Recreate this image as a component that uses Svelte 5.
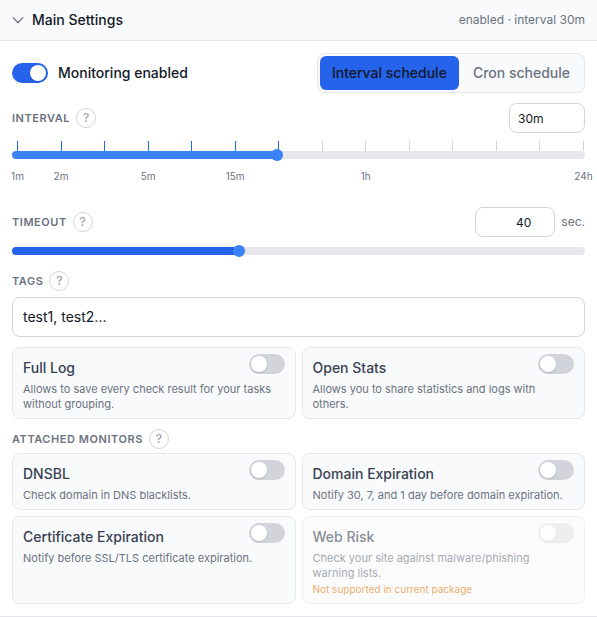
<script>
  const steps = ['1m', '2m', '', '5m', '', '15m', '', '', '1h', '', '', '', '', '24h'];

  let monitoring = $state(true);
  let schedule = $state('interval');
  let step = $state(6);
  let interval = $state('30m');
  let timeout = $state(40);
  let tags = $state('test1, test2...');

  const options = $state([
    { id: 'full-log', title: 'Full Log', text: 'Allows to save every check result for your tasks without grouping.', on: false },
    { id: 'open-stats', title: 'Open Stats', text: 'Allows you to share statistics and logs with others.', on: false }
  ]);
  const monitors = $state([
    { id: 'dnsbl', title: 'DNSBL', text: 'Check domain in DNS blacklists.', on: false },
    { id: 'domain', title: 'Domain Expiration', text: 'Notify 30, 7, and 1 day before domain expiration.', on: false },
    { id: 'certificate', title: 'Certificate Expiration', text: 'Notify before SSL/TLS certificate expiration.', on: false },
    { id: 'web-risk', title: 'Web Risk', text: 'Check your site against malware/phishing warning lists.', note: 'Not supported in current package', disabled: true, on: false }
  ]);
</script>

{#snippet help(topic)}
  <button type="button" class="help" aria-label={`Help: ${topic}`}>?</button>
{/snippet}

{#snippet cards(items)}
  <div class="cards">
    {#each items as item (item.id)}
      <div class="card" class:disabled={item.disabled}>
        <div class="card-head">
          <label for={item.id}>{item.title}</label>
          <input type="checkbox" role="switch" class="switch" id={item.id} bind:checked={item.on} disabled={item.disabled} />
        </div>
        <p>{item.text}</p>
        {#if item.note}<p class="note">{item.note}</p>{/if}
      </div>
    {/each}
  </div>
{/snippet}

<section class="panel">
  <header>
    <button type="button" class="collapse" aria-expanded="true">
      <svg width="12" height="12" viewBox="0 0 12 12" fill="none" stroke="#6b7280" stroke-width="1.3" stroke-linecap="round" stroke-linejoin="round" aria-hidden="true">
        <path d="M1.2 3.6 6 8.7l4.8-5.1" />
      </svg>
      Main Settings
    </button>
    <span class="summary">enabled · interval {interval}</span>
  </header>

  <div class="body">
    <div class="row">
      <label class="monitoring">
        <input type="checkbox" role="switch" class="switch" bind:checked={monitoring} />
        Monitoring enabled
      </label>
      <div class="segments">
        <button type="button" class:active={schedule === 'interval'} onclick={() => (schedule = 'interval')}>Interval schedule</button>
        <button type="button" class:active={schedule === 'cron'} onclick={() => (schedule = 'cron')}>Cron schedule</button>
      </div>
    </div>

    <div class="row">
      <div class="caption"><label for="interval">Interval</label>{@render help('interval')}</div>
      <input id="interval" class="box interval" type="text" bind:value={interval} />
    </div>
    <div class="scale">
      <div class="marks">
        {#each steps as _, i}<i class:passed={i <= step}></i>{/each}
      </div>
      <input type="range" class="light" aria-label="Interval step" min="0" max="13" bind:value={step} style:--fill={step / 13} />
      <div class="marks labels">
        {#each steps as text}<span>{text}</span>{/each}
      </div>
    </div>

    <div class="row">
      <div class="caption"><label for="timeout">Timeout</label>{@render help('timeout')}</div>
      <div class="timeout">
        <input id="timeout" class="box" type="number" min="1" max="100" bind:value={timeout} />
        <span>sec.</span>
      </div>
    </div>
    <input type="range" class="timeout-range" aria-label="Timeout in seconds" min="1" max="100" bind:value={timeout} style:--fill={(timeout - 1) / 99} />

    <div class="caption"><label for="tags">Tags</label>{@render help('tags')}</div>
    <input id="tags" class="box tags" type="text" bind:value={tags} />

    {@render cards(options)}

    <div class="caption attached"><span>Attached monitors</span>{@render help('attached monitors')}</div>
    {@render cards(monitors)}
  </div>
</section>

<style>
  :global(body) {
    background: #fff;
    overflow-x: hidden;
  }
  .panel,
  .panel * {
    box-sizing: border-box;
  }
  .panel {
    border-bottom: 1px solid #e5e7eb;
    color: #111827;
    font-family: Inter, 'Liberation Sans', sans-serif;
    font-size: 14px;
    line-height: 20px;
  }
  button,
  input {
    margin: 0;
    font: inherit;
    color: inherit;
  }
  button {
    border: 0;
    background: none;
    padding: 0;
    cursor: pointer;
  }
  header {
    display: flex;
    align-items: center;
    justify-content: space-between;
    padding: 10px 12px;
    border-bottom: 1px solid #e5e7eb;
    background: #f9fafb;
  }
  .collapse {
    display: flex;
    align-items: center;
    gap: 8px;
    font-weight: 500;
  }
  .summary {
    color: #6b7280;
    font-size: 12px;
  }
  .body {
    padding: 12px;
  }
  .row {
    display: flex;
    align-items: center;
    justify-content: space-between;
    margin-bottom: 10px;
  }
  .monitoring {
    display: flex;
    align-items: center;
    gap: 10px;
    font-weight: 500;
  }
  .switch {
    flex: none;
    appearance: none;
    display: flex;
    align-items: center;
    width: 36px;
    height: 20px;
    padding: 2px;
    border-radius: 10px;
    background: #d1d5db;
  }
  .switch::before {
    content: '';
    width: 16px;
    height: 16px;
    border-radius: 50%;
    background: #fff;
    box-shadow: 0 1px 2px rgb(0 0 0 / 15%);
  }
  .switch:checked {
    justify-content: flex-end;
    background: #2563eb;
  }
  .segments {
    display: flex;
    padding: 2px;
    border: 1px solid #e5e7eb;
    border-radius: 8px;
    background: #f9fafb;
  }
  .segments button {
    height: 34px;
    padding: 0 12px;
    border-radius: 6px;
    color: #6b7280;
    font-weight: 500;
  }
  .segments button + button {
    margin-left: 2px;
  }
  .segments .active {
    background: #2563eb;
    color: #111827;
  }
  .caption {
    display: flex;
    align-items: center;
    gap: 6px;
    color: #6b7280;
    font-size: 11px;
    font-weight: 600;
    letter-spacing: 0.05em;
    text-transform: uppercase;
  }
  .help {
    width: 20px;
    height: 20px;
    border: 1px solid #d1d5db;
    border-radius: 50%;
    background: #fff;
    color: #9ca3af;
    font-size: 12px;
    font-weight: 500;
    line-height: 18px;
    text-align: center;
  }
  .box {
    height: 30px;
    padding: 0 8px;
    border: 1px solid #d1d5db;
    border-radius: 8px;
    background: #fff;
    font-size: 12px;
  }
  .interval {
    width: 76px;
  }
  .timeout {
    display: flex;
    align-items: center;
    gap: 6px;
    color: #6b7280;
    font-size: 12px;
  }
  .timeout .box {
    width: 80px;
    color: #111827;
    text-align: right;
  }
  .scale {
    margin: -2px 0 24px;
  }
  .marks {
    display: flex;
    justify-content: space-between;
    margin: 0 1px 0 5px;
  }
  .marks i {
    width: 1px;
    height: 10px;
    background: #d1d5db;
  }
  .marks .passed {
    background: #2563eb;
  }
  .labels {
    height: 14px;
    margin-top: 10px;
    color: #6b7280;
    font-size: 10px;
    line-height: 14px;
  }
  .labels span {
    display: flex;
    justify-content: center;
    width: 1px;
    white-space: nowrap;
  }
  input[type='range'] {
    --color: #2563eb;
    appearance: none;
    display: block;
    width: 100%;
    height: 8px;
    border-radius: 4px;
    background: linear-gradient(to right, var(--color) calc(6px + (100% - 12px) * var(--fill)), #e5e7eb 0);
  }
  input[type='range'].light {
    --color: #3b82f6;
  }
  input[type='range']::-webkit-slider-runnable-track {
    height: 8px;
  }
  input[type='range']::-webkit-slider-thumb {
    appearance: none;
    width: 12px;
    height: 12px;
    margin-top: -2px;
    border-radius: 50%;
    background: #3b82f6;
  }
  .timeout-range {
    margin-bottom: 16px;
  }
  .tags {
    display: block;
    width: 100%;
    height: 40px;
    margin: 6px 0 10px;
    padding: 0 10px 2px;
    font-size: 14px;
  }
  .attached {
    margin: 10px 0 4px;
  }
  .cards {
    display: grid;
    grid-template-columns: repeat(2, minmax(0, 1fr));
    gap: 6px;
  }
  .card {
    padding: 6px 10px;
    border: 1px solid #e5e7eb;
    border-radius: 8px;
    background: #f9fafb;
  }
  .card-head {
    display: flex;
    align-items: flex-start;
    justify-content: space-between;
    height: 28px;
    color: #374151;
    font-weight: 500;
    line-height: 28px;
  }
  .card p {
    margin: 0;
    color: #6b7280;
    font-size: 11px;
    line-height: 15px;
  }
  .card .note {
    color: #d97706;
    font-size: 10px;
    line-height: 16px;
  }
  .card.disabled {
    opacity: 0.6;
  }
  .disabled .switch {
    opacity: 0.6;
  }
</style>
